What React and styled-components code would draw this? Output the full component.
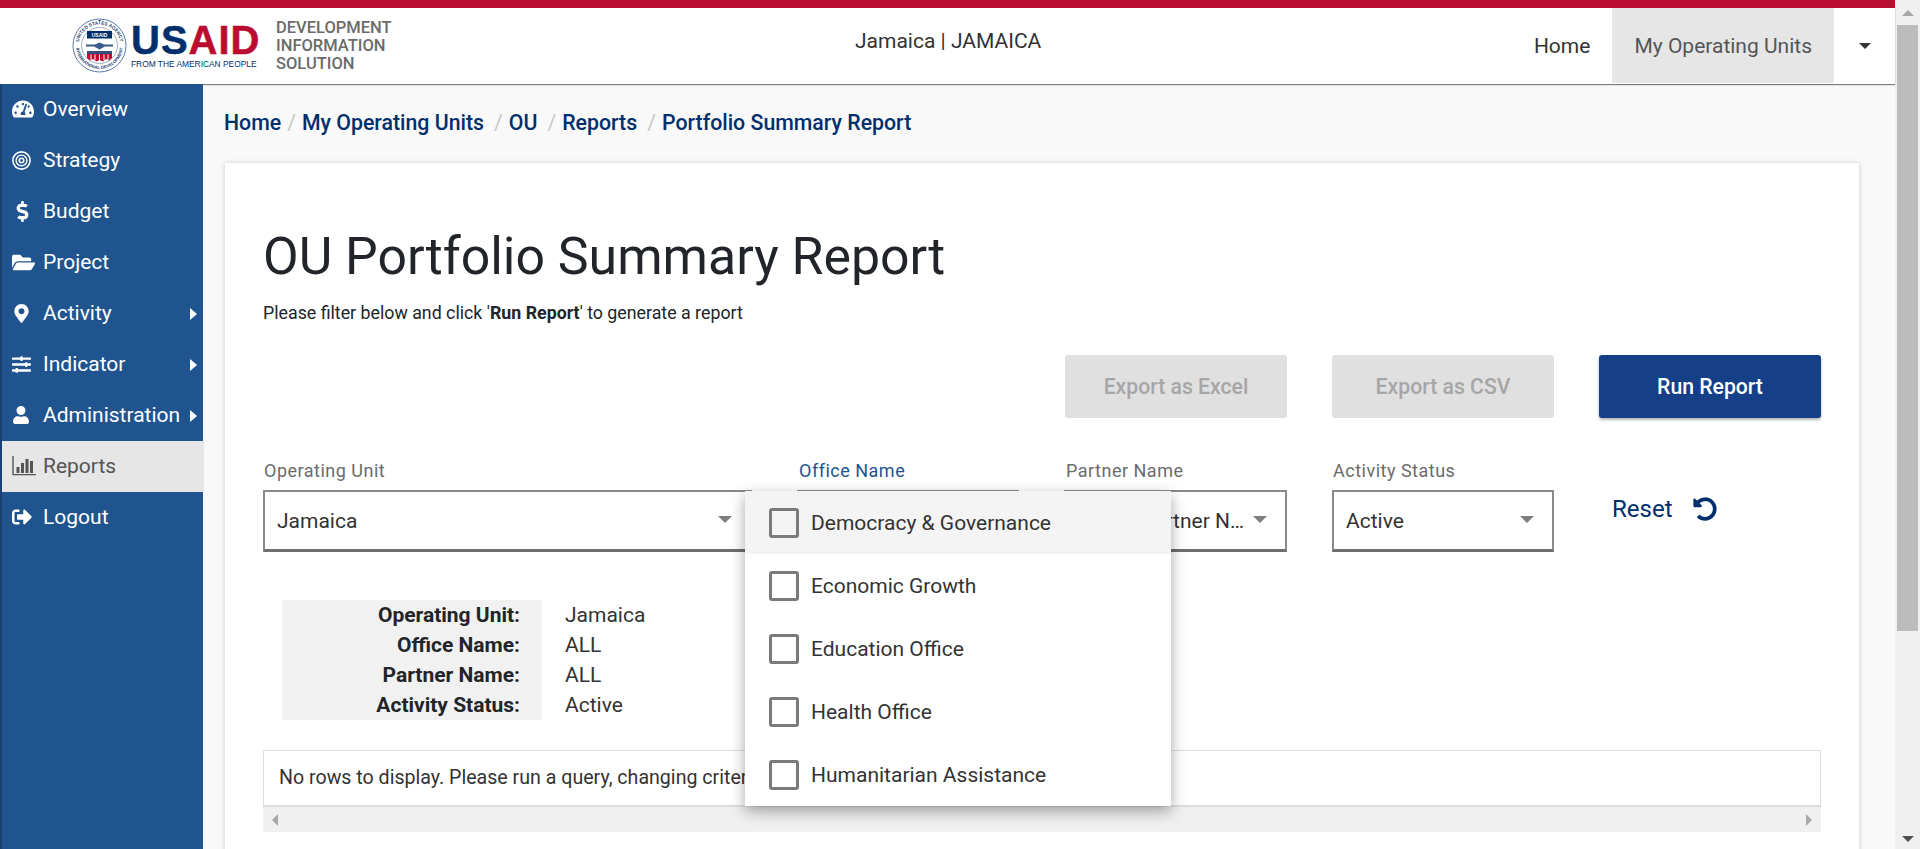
import React from 'react';
import styled, { createGlobalStyle } from 'styled-components';
import {
  FaTachometerAlt,
  FaDollarSign,
  FaFolderOpen,
  FaMapMarkerAlt,
  FaSlidersH,
  FaUser,
  FaSignOutAlt,
  FaUndoAlt
} from 'react-icons/fa';

const GlobalStyle = createGlobalStyle`
  html, body {
    margin: 0;
    height: 100%;
    overflow: hidden;
    font-family: Roboto, "Liberation Sans", sans-serif;
    color: #212529;
  }
  * { box-sizing: border-box; }
`;

const Screen = styled.div`
  display: flex;
  width: 1920px;
  height: 849px;
  overflow: hidden;
  background: #f9f9f9;
`;

const Page = styled.div`
  width: 1895px;
  display: flex;
  flex-direction: column;
`;

const Scrollbar = styled.div`
  width: 25px;
  background: #f0f0f0;
  display: flex;
  flex-direction: column;
  align-items: center;
  padding: 10px 0 0 0;
`;

const ScrollThumb = styled.div`
  width: 21px;
  height: 606px;
  margin: 9px 0 0 0;
  background: #bcbcbc;
`;

const ArrowUp = styled.div`
  width: 0;
  height: 0;
  border-left: 6px solid transparent;
  border-right: 6px solid transparent;
  border-bottom: 6px solid #a8a8a8;
`;

const ArrowDown = styled.div`
  width: 0;
  height: 0;
  margin-top: auto;
  margin-bottom: 7px;
  border-left: 6px solid transparent;
  border-right: 6px solid transparent;
  border-top: 6px solid #505050;
`;

const RedBar = styled.div`
  height: 8px;
  background: #ba0c2f;
  flex: none;
`;

const Header = styled.header`
  height: 76px;
  flex: none;
  background: #fff;
  display: flex;
  align-items: flex-start;
  box-shadow: 0 1px 1px rgba(0, 0, 0, 0.5);
  position: relative;
  z-index: 2;
`;

const LogoWrap = styled.div`
  display: flex;
  align-items: center;
  width: 855px;
  padding: 10px 0 0 72px;
  flex: none;
`;

const LogoWords = styled.div`
  margin-left: 4px;
  width: 128px;
  display: flex;
  flex-direction: column;
`;

const LogoMain = styled.div`
  font-family: "Liberation Sans", Arial, sans-serif;
  font-weight: 700;
  font-size: 40px;
  line-height: 36px;
  letter-spacing: 1px;
  -webkit-text-stroke: 0.5px currentColor;
  color: #002f6c;
  white-space: nowrap;
  span { color: #ba0c2f; }
`;

const LogoSub = styled.div`
  font-family: "Liberation Sans", Arial, sans-serif;
  font-size: 8.4px;
  line-height: 10px;
  color: #002f6c;
  white-space: nowrap;
  margin-top: 1px;
`;

const SystemName = styled.div`
  margin-left: 17px;
  font-size: 16.5px;
  font-weight: 500;
  line-height: 18px;
  color: #6b6b6b;
`;

const OuTitle = styled.div`
  padding-top: 22px;
  font-size: 21px;
  line-height: 22px;
  color: #333;
  white-space: nowrap;
`;

const Nav = styled.nav`
  margin-left: auto;
  height: 75px;
  display: flex;
  align-items: center;
`;

const NavLink = styled.div`
  height: 100%;
  display: flex;
  align-items: center;
  padding: 0 22px;
  font-size: 21px;
  color: ${p => (p.$active ? '#555' : '#333')};
  background: ${p => (p.$active ? '#e6e6e6' : 'transparent')};
`;

const NavCaret = styled.div`
  width: 0;
  height: 0;
  margin: 0 24px 0 25px;
  border-left: 6px solid transparent;
  border-right: 6px solid transparent;
  border-top: 6px solid #333;
`;

const Body = styled.div`
  flex: 1;
  display: flex;
  min-height: 0;
`;

const Sidebar = styled.aside`
  width: 203px;
  flex: none;
  background: #20548f;
  border-left: 2px solid #1a3f73;
  position: relative;
  z-index: 3;
`;

const SideItem = styled.div`
  height: 51px;
  display: flex;
  align-items: center;
  padding: 0 0 1px 10px;
  font-size: 21px;
  white-space: nowrap;
  color: ${p => (p.$active ? '#555' : '#fff')};
  background: ${p => (p.$active ? '#e6e6e6' : 'transparent')};
  width: ${p => (p.$active ? '202px' : 'auto')};
  position: relative;
`;

const SideIcon = styled.span`
  width: 31px;
  flex: none;
  display: flex;
  align-items: center;
  svg { display: block; }
`;

const SideCaret = styled.span`
  position: absolute;
  right: 6px;
  top: 20px;
  width: 0;
  height: 0;
  border-top: 6px solid transparent;
  border-bottom: 6px solid transparent;
  border-left: 7px solid #fff;
`;

const Main = styled.main`
  flex: 1;
  min-width: 0;
  padding: 0 36px 0 22px;
`;

const Breadcrumb = styled.div`
  height: 79px;
  display: flex;
  align-items: flex-start;
  padding-top: 27px;
  font-size: 21.3px;
  font-weight: 500;
  line-height: 24px;
  color: #002f6c;
  white-space: nowrap;
  margin-left: -1px;
`;

const Slash = styled.span`
  color: #c8c8c8;
  font-weight: 400;
  margin: 0 6px 0 ${p => (p.$wide ? '10px' : '6px')};
`;

const Card = styled.section`
  background: #fff;
  height: 800px;
  padding: 61px 38px 0 38px;
  box-shadow: 0 0 5px rgba(0, 0, 0, 0.18);
`;

const Title = styled.h1`
  margin: 0;
  font-size: 51.8px;
  font-weight: 400;
  line-height: 66px;
  color: #212529;
`;

const Hint = styled.p`
  margin: 11px 0 0 0;
  font-size: 17.8px;
  line-height: 24px;
  color: #212529;
  b { font-weight: 700; }
`;

const ButtonRow = styled.div`
  display: flex;
  justify-content: flex-end;
  gap: 45px;
  margin-top: 30px;
`;

const ActionButton = styled.button`
  width: 222px;
  height: 63px;
  border: 0;
  border-radius: 3px;
  font-family: inherit;
  font-size: 21.2px;
  font-weight: 500;
  background: ${p => (p.$primary ? '#153f87' : '#e0e0e0')};
  color: ${p => (p.$primary ? '#fff' : '#a6a6a6')};
  box-shadow: ${p => (p.$primary ? '0 2px 3px rgba(0,0,0,0.3)' : 'none')};
`;

const FilterRow = styled.div`
  display: flex;
  gap: 45px;
  margin-top: 42px;
`;

const Field = styled.div`
  width: ${p => p.$width}px;
  flex: none;
  position: relative;
`;

const FieldLabel = styled.div`
  height: 30px;
  font-size: 18px;
  line-height: 22px;
  letter-spacing: 0.5px;
  padding-left: ${p => (p.$inset ? '2px' : '1px')};
  color: ${p => (p.$focus ? '#20548f' : '#6b6b6b')};
`;

const SelectBox = styled.div`
  height: 62px;
  display: flex;
  align-items: center;
  padding: 0 18px 0 12px;
  border: 2px solid #8a8a8a;
  border-bottom: 3px solid #6e6e6e;
  font-size: 21px;
  color: #333;
  background: #fff;
  white-space: nowrap;
  span { flex: 1; min-width: 0; overflow: hidden; }
`;

const SelectCaret = styled.i`
  flex: none;
  width: 0;
  height: 0;
  border-left: 7px solid transparent;
  border-right: 7px solid transparent;
  border-top: 7px solid #7f7f7f;
  margin-top: -3px;
`;

const ResetLink = styled.div`
  display: flex;
  align-items: center;
  gap: 21px;
  margin: 31px 0 0 13px;
  height: 36px;
  font-size: 24px;
  color: #002f6c;
  svg { display: block; }
`;

const Menu = styled.div`
  position: absolute;
  z-index: 5;
  top: 31px;
  left: -52px;
  width: 426px;
  background: #fff;
  box-shadow: 0 5px 14px rgba(0, 0, 0, 0.35);
`;

const MenuItem = styled.div`
  height: 63px;
  display: flex;
  align-items: center;
  padding-left: 24px;
  font-size: 21px;
  color: #333;
  background: ${p => (p.$hover ? '#f4f4f4' : '#fff')};
`;

const CheckBox = styled.span`
  width: 30px;
  height: 30px;
  border: 3px solid #7a7a7a;
  border-radius: 3px;
  margin-right: 12px;
  flex: none;
`;

const SummaryRow = styled.div`
  display: flex;
  margin: 48px 0 0 19px;
`;

const SummaryLabels = styled.div`
  width: 260px;
  height: 120px;
  background: #f1f1f1;
  padding-right: 22px;
  text-align: right;
  font-size: 21px;
  font-weight: 700;
  line-height: 30px;
`;

const SummaryValues = styled.div`
  padding-left: 23px;
  font-size: 21px;
  line-height: 30px;
  color: #333;
`;

const GridBox = styled.div`
  margin-top: 30px;
  height: 57px;
  border: 1px solid #ddd;
  border-bottom-width: 2px;
  padding: 0 15px 2px;
  display: flex;
  align-items: center;
  font-size: 19.6px;
  color: #333;
  white-space: nowrap;
  overflow: hidden;
`;

const GridScroll = styled.div`
  height: 25px;
  background: #f0f0f0;
  display: flex;
  align-items: center;
  justify-content: space-between;
  padding: 0 9px;
`;

const ArrowSide = styled.div`
  width: 0;
  height: 0;
  border-top: 6px solid transparent;
  border-bottom: 6px solid transparent;
  ${p => (p.$left ? 'border-right' : 'border-left')}: 6px solid #a8a8a8;
`;

const BarsIcon = () => (
  <svg width="24" height="20" viewBox="0 0 24 20">
    <path d="M1 0v18.6h23" fill="none" stroke="#555" strokeWidth="1.4" />
    <path
      d="M4.5 11h3v6h-3zM9 7h3v10H9zM13.5 3h3v14h-3zM18 5h3v12h-3z"
      fill="#555"
    />
  </svg>
);

const RingsIcon = () => (
  <svg width="19" height="19" viewBox="0 0 19 19" fill="none" stroke="#fff">
    <circle cx="9.5" cy="9.5" r="8.6" strokeWidth="1.6" />
    <circle cx="9.5" cy="9.5" r="5.4" strokeWidth="1.4" />
    <circle cx="9.5" cy="9.5" r="2.2" strokeWidth="1.6" />
  </svg>
);

const UsaidSeal = () => (
  <svg width="55" height="55" viewBox="0 0 110 110">
    <circle cx="55" cy="55" r="53" fill="#fff" stroke="#5b7aa5" strokeWidth="2" />
    <circle cx="55" cy="55" r="36" fill="#fff" stroke="#7c93b5" strokeWidth="1.5" />
    <defs>
      <path id="sealTop" d="M13 55a42 42 0 0 1 84 0" />
      <path id="sealBottom" d="M8 55a47 47 0 0 0 94 0" />
    </defs>
    <text fontFamily="Liberation Sans" fontSize="9.5" fontWeight="700" fill="#1f3f73">
      <textPath href="#sealTop" startOffset="50%" textAnchor="middle">
        UNITED STATES AGENCY
      </textPath>
    </text>
    <text fontFamily="Liberation Sans" fontSize="8.6" fontWeight="700" fill="#1f3f73">
      <textPath href="#sealBottom" startOffset="50%" textAnchor="middle">
        INTERNATIONAL DEVELOPMENT
      </textPath>
    </text>
    <rect x="30" y="26" width="50" height="15" fill="#002f6c" />
    <text x="55" y="37" textAnchor="middle" fontFamily="Liberation Sans" fontSize="10" fontWeight="700" fill="#fff">
      USAID
    </text>
    <path d="M28 53h18l9-4 9 4h18v4H66l-11 6-11-6H28z" fill="#3a5b8c" />
    <path d="M30 66h50v6H30z" fill="#34507f" />
    <path d="M30 72h50v8l-6 5-6-3-6 5-7-3-7 3-6-5-6 3-6-5z" fill="#ba0c2f" />
    <path d="M38 73v11M46 73v12M55 73v14M64 73v12M72 73v11" stroke="#fff" strokeWidth="2" />
  </svg>
);

const sideItems = [
  { label: 'Overview', icon: <FaTachometerAlt size={22} /> },
  { label: 'Strategy', icon: <RingsIcon /> },
  { label: 'Budget', icon: <FaDollarSign size={21} /> },
  { label: 'Project', icon: <FaFolderOpen size={23} /> },
  { label: 'Activity', icon: <FaMapMarkerAlt size={19} />, more: true },
  { label: 'Indicator', icon: <FaSlidersH size={19} />, more: true },
  { label: 'Administration', icon: <FaUser size={18} />, more: true },
  { label: 'Reports', icon: <BarsIcon />, active: true },
  { label: 'Logout', icon: <FaSignOutAlt size={20} /> }
];

const officeOptions = [
  'Democracy & Governance',
  'Economic Growth',
  'Education Office',
  'Health Office',
  'Humanitarian Assistance'
];

const App = () => (
  <Screen>
    <GlobalStyle />
    <Page>
      <RedBar />
      <Header>
        <LogoWrap>
          <UsaidSeal />
          <LogoWords>
            <LogoMain>
              US<span>AID</span>
            </LogoMain>
            <LogoSub>FROM THE AMERICAN PEOPLE</LogoSub>
          </LogoWords>
          <SystemName>
            DEVELOPMENT
            <br />
            INFORMATION
            <br />
            SOLUTION
          </SystemName>
        </LogoWrap>
        <OuTitle>Jamaica | JAMAICA</OuTitle>
        <Nav>
          <NavLink>Home</NavLink>
          <NavLink $active>My Operating Units</NavLink>
          <NavCaret />
        </Nav>
      </Header>
      <Body>
        <Sidebar>
          {sideItems.map(item => (
            <SideItem key={item.label} $active={item.active}>
              <SideIcon>{item.icon}</SideIcon>
              {item.label}
              {item.more && <SideCaret />}
            </SideItem>
          ))}
        </Sidebar>
        <Main>
          <Breadcrumb>
            Home<Slash>/</Slash>My Operating Units<Slash $wide>/</Slash>OU
            <Slash $wide>/</Slash>Reports<Slash $wide>/</Slash>Portfolio Summary Report
          </Breadcrumb>
          <Card>
            <Title>OU Portfolio Summary Report</Title>
            <Hint>
              Please filter below and click '<b>Run Report</b>' to generate a report
            </Hint>
            <ButtonRow>
              <ActionButton>Export as Excel</ActionButton>
              <ActionButton>Export as CSV</ActionButton>
              <ActionButton $primary>Run Report</ActionButton>
            </ButtonRow>
            <FilterRow>
              <Field $width={489}>
                <FieldLabel>Operating Unit</FieldLabel>
                <SelectBox>
                  <span>Jamaica</span>
                  <SelectCaret />
                </SelectBox>
              </Field>
              <Field $width={222}>
                <FieldLabel $focus $inset>Office Name</FieldLabel>
                <SelectBox>
                  <span />
                  <SelectCaret />
                </SelectBox>
                <Menu>
                  {officeOptions.map((name, i) => (
                    <MenuItem key={name} $hover={i === 0}>
                      <CheckBox />
                      {name}
                    </MenuItem>
                  ))}
                </Menu>
              </Field>
              <Field $width={223}>
                <FieldLabel $inset>Partner Name</FieldLabel>
                <SelectBox>
                  <span>Select Partner N…</span>
                  <SelectCaret />
                </SelectBox>
              </Field>
              <Field $width={222}>
                <FieldLabel>Activity Status</FieldLabel>
                <SelectBox>
                  <span>Active</span>
                  <SelectCaret />
                </SelectBox>
              </Field>
              <ResetLink>
                Reset
                <FaUndoAlt size={24} />
              </ResetLink>
            </FilterRow>
            <SummaryRow>
              <SummaryLabels>
                Operating Unit:
                <br />
                Office Name:
                <br />
                Partner Name:
                <br />
                Activity Status:
              </SummaryLabels>
              <SummaryValues>
                Jamaica
                <br />
                ALL
                <br />
                ALL
                <br />
                Active
              </SummaryValues>
            </SummaryRow>
            <GridBox>No rows to display. Please run a query, changing criteria as needed.</GridBox>
            <GridScroll>
              <ArrowSide $left />
              <ArrowSide />
            </GridScroll>
          </Card>
        </Main>
      </Body>
    </Page>
    <Scrollbar>
      <ArrowUp />
      <ScrollThumb />
      <ArrowDown />
    </Scrollbar>
  </Screen>
);

export default App;
